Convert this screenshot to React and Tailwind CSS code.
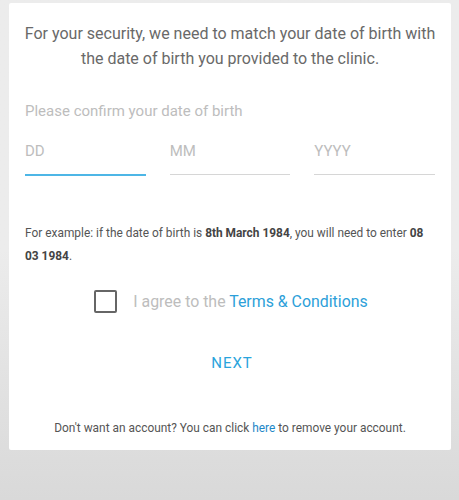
export default function App() {
  return (
    <div className="w-[459px] h-[500px] bg-gradient-to-b from-[#ececec] via-[#ececec] to-[#d9d9d9] pt-[3px] overflow-hidden" style={{ fontFamily: "Roboto, 'Liberation Sans', sans-serif" }}>
      <div className="ml-[9px] w-[442px] h-[447px] bg-white rounded-[2px] px-[16px] pt-[18px]">
        <p className="text-[16px] leading-[25px] text-[#696969] text-center -mx-[6px]">
          For your security, we need to match your date of birth with the date of birth you provided to the clinic.
        </p>
        <p className="mt-[30px] text-[15px] text-[#bdbdbd] leading-[20px]">Please confirm your date of birth</p>
        <div className="mt-[20px] grid grid-cols-3 gap-[24px] w-[410px]">
          <div className="h-[35px] border-b-2 border-[#4db6e6] text-[15px] text-[#bdbdbd] leading-[20px]">DD</div>
          <div className="h-[34px] border-b border-[#d6d6d6] text-[15px] text-[#bdbdbd] leading-[20px]">MM</div>
          <div className="h-[34px] border-b border-[#d6d6d6] text-[15px] text-[#bdbdbd] leading-[20px]">YYYY</div>
        </div>
        <p className="mt-[46px] text-[11.9px] leading-[23px] text-[#555] w-[405px]">
          For example: if the date of birth is <b className="text-[#444]">8th March 1984</b>, you will need to enter <b className="text-[#444]">08 03 1984</b>.
        </p>
        <div className="mt-[22px] flex items-center justify-center pl-[2px]">
          <div className="w-[23px] h-[23px] border-2 border-[#666] rounded-[2px]"></div>
          <span className="ml-[16px] text-[15.9px] text-[#bdbdbd]">I agree to the <span className="text-[#2d9fd9]">Terms &amp; Conditions</span></span>
        </div>
        <div className="mt-[38px] text-center text-[15px] text-[#2aa4dc] tracking-[1px] pl-[4px]">NEXT</div>
        <p className="mt-[46px] text-center text-[11.9px] text-[#555]">
          Don't want an account? You can click <span className="text-[#1e88c8]">here</span> to remove your account.
        </p>
      </div>
    </div>
  );
}
